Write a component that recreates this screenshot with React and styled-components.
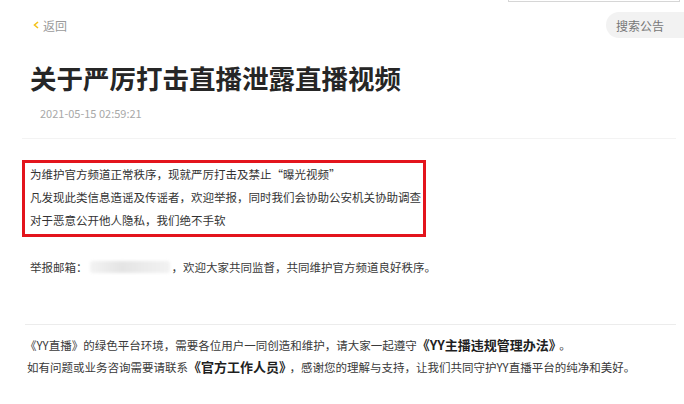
import React from "react";
import styled, { createGlobalStyle } from "styled-components";

const GlobalStyle = createGlobalStyle`
  html, body {
    margin: 0;
    padding: 0;
    background: #fff;
  }
  body {
    font-family: "Noto Sans CJK SC", "Liberation Sans", sans-serif;
    color: #333;
  }
`;

const Page = styled.div`
  width: 684px;
  height: 404px;
  overflow: hidden;
  background: #fff;
`;

const TopRow = styled.div`
  display: flex;
  justify-content: flex-end;
  padding-right: 4px;
`;

const CutInput = styled.div`
  width: 170px;
  height: 1px;
  border: 1px solid #d6d6d6;
  border-top: none;
`;

const Header = styled.div`
  display: flex;
  justify-content: space-between;
  align-items: center;
  height: 26px;
  margin-top: 10px;
  padding-left: 33px;
`;

const Back = styled.div`
  display: flex;
  align-items: center;
  gap: 4px;
  font-size: 12px;
  color: #9a9a9a;
`;

const Search = styled.div`
  display: flex;
  align-items: center;
  box-sizing: border-box;
  width: 78px;
  height: 26px;
  padding-left: 10px;
  border-radius: 13px 0 0 13px;
  background: #f2f2f2;
  font-size: 12px;
  color: #777;
`;

const Title = styled.h1`
  margin: 23px 0 0 30px;
  font-size: 26.5px;
  line-height: 34px;
  font-weight: 700;
  color: #262626;
`;

const Date = styled.div`
  margin: 10px 0 0 40px;
  font-size: 11px;
  line-height: 16px;
  color: #a8a8a8;
`;

const Divider = styled.div`
  height: 1px;
  margin: ${(p) => p.$top}px 8px 0 ${(p) => p.$left}px;
  background: ${(p) => p.$color || "#f0f0f0"};
`;

const Notice = styled.div`
  box-sizing: border-box;
  width: 404px;
  margin: 21px 0 0 22px;
  padding: 0 0 2px 5px;
  border: 3px solid #e3141c;
  font-size: 11.5px;
  line-height: 23px;
  color: #333;
`;

const Paragraph = styled.p`
  margin: ${(p) => p.$top}px 0 0 ${(p) => p.$left}px;
  font-size: 11.5px;
  line-height: ${(p) => p.$lh || 20}px;
  color: #3a3a3a;
  white-space: nowrap;
`;

const Blurred = styled.span`
  display: inline-block;
  width: 80px;
  height: 12px;
  margin: 0 2px;
  vertical-align: -1px;
  border-radius: 3px;
  background: linear-gradient(90deg, #f3f3f3, #e4e4e4 40%, #ececec 70%, #f2f2f2);
  filter: blur(1.5px);
`;

const Strong = styled.b`
  font-size: 13px;
  font-weight: 700;
  color: #1f1f1f;
`;

const Punct = styled.span`
  margin-left: 4px;
`;

export default function App() {
  return (
    <Page>
      <GlobalStyle />
      <TopRow>
        <CutInput />
      </TopRow>
      <Header>
        <Back>
          <svg width="6" height="8" viewBox="0 0 6 8">
            <path d="M5 1 L1.5 4 L5 7" fill="none" stroke="#f4c21b" strokeWidth="1.6" />
          </svg>
          返回
        </Back>
        <Search>搜索公告</Search>
      </Header>
      <Title>关于严厉打击直播泄露直播视频</Title>
      <Date>2021-05-15 02:59:21</Date>
      <Divider $top={17} $left={22} $color="#f3f3f3" />
      <Notice>
        <div>为维护官方频道正常秩序，现就严厉打击及禁止“曝光视频”</div>
        <div>凡发现此类信息造谣及传谣者，欢迎举报，同时我们会协助公安机关协助调查</div>
        <div>对于恶意公开他人隐私，我们绝不手软</div>
      </Notice>
      <Paragraph $top={20} $left={30}>
        举报邮箱：<Blurred />，欢迎大家共同监督，共同维护官方频道良好秩序。
      </Paragraph>
      <Divider $top={47} $left={25} $color="#ececec" />
      <Paragraph $top={9} $left={25} $lh={22}>
        《YY直播》的绿色平台环境，需要各位用户一同创造和维护，请大家一起遵守<Strong>《YY主播违规管理办法》</Strong><Punct>。</Punct>
      </Paragraph>
      <Paragraph $top={0} $left={27} $lh={22}>
        如有问题或业务咨询需要请联系<Strong>《官方工作人员》</Strong><Punct>，</Punct>感谢您的理解与支持，让我们共同守护YY直播平台的纯净和美好。
      </Paragraph>
    </Page>
  );
}
